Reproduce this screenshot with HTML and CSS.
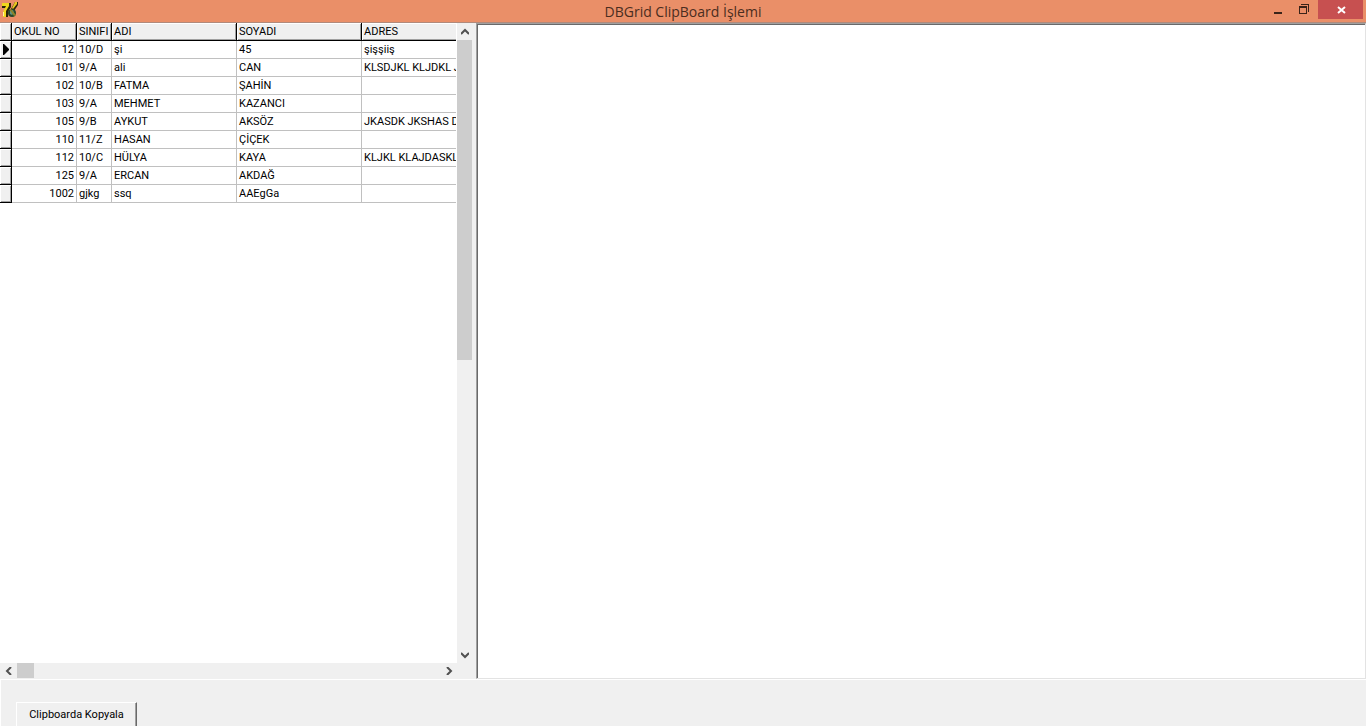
FILE: index.html
```html
<!DOCTYPE html>
<html lang="tr">
<head>
<meta charset="UTF-8">
<meta name="viewport" content="width=device-width, initial-scale=1">
<title>DBGrid ClipBoard İşlemi</title>
<link rel="stylesheet" href="styles.css">
</head>
<body>

  <!-- Başlık çubuğu -->
  <header class="titlebar">
    <svg class="app-icon" viewBox="0 0 17 17" width="17" height="17" aria-hidden="true">
      <path d="M1 1h9v4L7 10v5H2v-4l3-5H1z" fill="#2a2408"/>
      <path d="M1 1h7v3L5 9v6H2v-5l3-6H1z" fill="#f2d81c"/>
      <path d="M2 10h1v4H2z" fill="#fff6a0"/>
      <path d="M14 0h3v3l-4 6-3-2z" fill="#2a2408"/>
      <path d="M14 0h2v2l-4 5-1-1z" fill="#e8c820"/>
      <circle cx="11" cy="11" r="4" fill="#26482c"/>
      <path d="M9 9l3-1 1 3-2 2-2-1z" fill="#5f9080"/>
      <path d="M8 7h2l5 6-2 1z" fill="#8d8428"/>
    </svg>
    <h1>DBGrid ClipBoard İşlemi</h1>
    <div class="window-buttons">
      <button type="button" aria-label="Küçült">
        <svg viewBox="0 0 12 12" width="12" height="12"><path d="M2 8h8v2H2z" fill="#3a2419"/></svg>
      </button>
      <button type="button" aria-label="Geri yükle">
        <svg viewBox="0 0 12 12" width="12" height="12" shape-rendering="crispEdges"><path d="M3 0h8v8h-1V1H3zM1 2h8v8H1zM2 4v5h6V4z" fill="#3a2419" fill-rule="evenodd"/></svg>
      </button>
      <button type="button" class="close" aria-label="Kapat">
        <svg viewBox="0 0 12 12" width="12" height="12"><path d="M3 3l7 6M10 3L3 9" stroke="#fff" stroke-width="2"/></svg>
      </button>
    </div>
  </header>

  <main>
    <!-- Öğrenci listesi -->
    <section class="dbgrid">
      <div class="grid-view">
        <table>
          <colgroup>
            <col class="col-mark"><col class="col-no"><col class="col-sinif">
            <col class="col-ad"><col class="col-ad"><col class="col-adres">
          </colgroup>
          <thead>
            <tr><td class="mark"></td><th>OKUL NO</th><th>SINIFI</th><th>ADI</th><th>SOYADI</th><th>ADRES</th></tr>
          </thead>
          <tbody>
            <tr><td class="mark"><svg viewBox="0 0 6 11" width="6" height="11" aria-hidden="true"><path d="M0 0h1l5 5v1l-5 5H0z"/></svg></td><td class="no">12</td><td>10/D</td><td>şi</td><td>45</td><td>şişşiiş</td></tr>
            <tr><td class="mark"></td><td class="no">101</td><td>9/A</td><td>ali</td><td>CAN</td><td>KLSDJKL KLJDKL J</td></tr>
            <tr><td class="mark"></td><td class="no">102</td><td>10/B</td><td>FATMA</td><td>ŞAHİN</td><td></td></tr>
            <tr><td class="mark"></td><td class="no">103</td><td>9/A</td><td>MEHMET</td><td>KAZANCI</td><td></td></tr>
            <tr><td class="mark"></td><td class="no">105</td><td>9/B</td><td>AYKUT</td><td>AKSÖZ</td><td>JKASDK JKSHAS D</td></tr>
            <tr><td class="mark"></td><td class="no">110</td><td>11/Z</td><td>HASAN</td><td>ÇİÇEK</td><td></td></tr>
            <tr><td class="mark"></td><td class="no">112</td><td>10/C</td><td>HÜLYA</td><td>KAYA</td><td>KLJKL KLAJDASKL</td></tr>
            <tr><td class="mark"></td><td class="no">125</td><td>9/A</td><td>ERCAN</td><td>AKDAĞ</td><td></td></tr>
            <tr><td class="mark"></td><td class="no">1002</td><td>gjkg</td><td>ssq</td><td>AAEgGa</td><td></td></tr>
          </tbody>
        </table>
      </div>

      <div class="scroll vertical">
        <button type="button" aria-label="Yukarı"><svg viewBox="0 0 8 8" width="8" height="8"><path d="M0 6l4-4 4 4"/></svg></button>
        <div class="thumb"></div>
        <button type="button" aria-label="Aşağı"><svg viewBox="0 0 8 8" width="8" height="8"><path d="M0 2l4 4 4-4"/></svg></button>
      </div>

      <div class="scroll horizontal">
        <button type="button" aria-label="Sola"><svg viewBox="0 0 8 8" width="8" height="8"><path d="M6 0L2 4l4 4"/></svg></button>
        <div class="thumb"></div>
        <button type="button" aria-label="Sağa"><svg viewBox="0 0 8 8" width="8" height="8"><path d="M2 0l4 4-4 4"/></svg></button>
      </div>
    </section>

    <textarea class="memo" aria-label="Pano içeriği"></textarea>
  </main>

  <footer>
    <button type="button" class="copy">Clipboarda Kopyala</button>
  </footer>

</body>
</html>
```
FILE: styles.css
```css
* {
  box-sizing: border-box;
}

body {
  margin: 0;
  height: 100vh;
  display: flex;
  flex-direction: column;
  overflow: hidden;
  background: #f0f0f0;
  color: #000;
  font: 11px/14px Roboto, "Liberation Sans", sans-serif;
}

button {
  font: inherit;
  color: inherit;
  border: 0;
  padding: 0;
  background: none;
}

svg {
  display: block;
}

/* Başlık çubuğu */
.titlebar {
  flex: none;
  height: 23px;
  display: grid;
  grid-template-columns: 1fr auto 1fr;
  align-items: start;
  background: #ea8f68;
  border-bottom: 1px solid #b08a7c;
}

.app-icon {
  margin: 2px 1px;
}

.titlebar h1 {
  margin: 0;
  font: 14px/24px "Open Sans", "Noto Sans", sans-serif;
  color: #4a2d20;
}

.window-buttons {
  justify-self: end;
  display: flex;
  padding-right: 3px;
}

.window-buttons button {
  width: 26px;
  height: 19px;
  padding-right: 2px;
  display: flex;
  align-items: center;
  justify-content: center;
}

.window-buttons .close {
  width: 45px;
  padding: 0;
  background: #c75050;
}

/* Tablo ve metin alanı */
main {
  flex: 1;
  min-height: 0;
  display: flex;
}

.dbgrid {
  flex: 0 0 476px;
  display: grid;
  grid-template: 1fr 16px / 1fr 19px;
  background: #f0f0f0;
}

.grid-view {
  min-width: 0;
  overflow: hidden;
  background: #fff;
  border-right: 1px solid #fff;
}

table {
  width: 562px;
  table-layout: fixed;
  border-spacing: 0;
}

.col-mark { width: 12px; }
.col-no { width: 65px; }
.col-sinif { width: 35px; }
.col-ad { width: 125px; }
.col-adres { width: 200px; }

th,
td {
  height: 18px;
  padding: 0 2px;
  border-right: 1px solid #c0c0c0;
  border-bottom: 1px solid #c0c0c0;
  text-align: left;
  font-weight: normal;
  line-height: 17px;
  white-space: nowrap;
  overflow: hidden;
}

th,
.mark {
  background: #f0f0f0;
  border-color: #000;
  box-shadow: inset 1px 1px #fff, inset -1px -1px #a0a0a0;
}

.mark {
  padding: 0 3px;
}

.no {
  text-align: right;
}

/* Kaydırma çubukları */
.scroll {
  display: flex;
  background: #f0f0f0;
}

.scroll button {
  flex: none;
  width: 15px;
  height: 17px;
  display: flex;
  align-items: center;
  justify-content: center;
}

.scroll path {
  fill: none;
  stroke: #505050;
  stroke-width: 2;
}

.scroll .thumb {
  background: #cdcdcd;
}

.vertical {
  flex-direction: column;
}

.vertical .thumb {
  width: 15px;
  height: 320px;
}

.vertical button:last-child {
  margin-top: auto;
}

.horizontal button {
  width: 17px;
  height: 15px;
}

.horizontal .thumb {
  width: 17px;
  height: 15px;
}

.horizontal button:last-child {
  margin-left: auto;
}

.memo {
  flex: 1;
  min-width: 0;
  margin: 0;
  padding: 2px;
  border: 1px solid;
  border-color: #a0a0a0 #e3e3e3 #e3e3e3 #a0a0a0;
  border-radius: 0;
  box-shadow: inset 1px 1px #696969;
  background: #fff;
  font: inherit;
  resize: none;
  outline: 0;
}

/* Alt panel */
footer {
  flex: none;
  height: 47px;
  padding: 22px 15px 0;
  border: solid #fff;
  border-width: 1px 0 0 1px;
  overflow: hidden;
}

.copy {
  width: 121px;
  height: 26px;
  border: 1px solid;
  border-color: #fff #696969 #696969 #fff;
  box-shadow: inset -1px -1px #a0a0a0;
}
```
